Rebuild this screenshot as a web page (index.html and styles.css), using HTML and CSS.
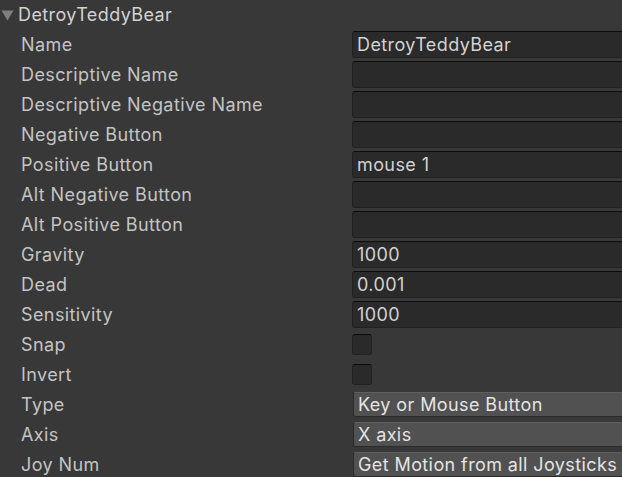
FILE: index.html
```html
<!DOCTYPE html>
<html>
<head>
<meta charset="utf-8">
<link rel="stylesheet" href="styles.css">
</head>
<body>
<div class="inspector">
  <div class="header">
    <svg class="foldout" width="13" height="11" viewBox="0 0 13 11"><polygon points="0.5,0.5 12.5,0.5 6.5,10.5" fill="#7f7f7f"/></svg>
    <span class="title">DetroyTeddyBear</span>
  </div>
  <div class="row"><span class="label">Name</span><div class="field">DetroyTeddyBear</div></div>
  <div class="row"><span class="label">Descriptive Name</span><div class="field"></div></div>
  <div class="row"><span class="label">Descriptive Negative Name</span><div class="field"></div></div>
  <div class="row"><span class="label">Negative Button</span><div class="field"></div></div>
  <div class="row"><span class="label">Positive Button</span><div class="field">mouse 1</div></div>
  <div class="row"><span class="label">Alt Negative Button</span><div class="field"></div></div>
  <div class="row"><span class="label">Alt Positive Button</span><div class="field"></div></div>
  <div class="row"><span class="label">Gravity</span><div class="field">1000</div></div>
  <div class="row"><span class="label">Dead</span><div class="field">0.001</div></div>
  <div class="row"><span class="label">Sensitivity</span><div class="field">1000</div></div>
  <div class="row"><span class="label">Snap</span><div class="checkbox"></div></div>
  <div class="row"><span class="label">Invert</span><div class="checkbox"></div></div>
  <div class="row"><span class="label">Type</span><div class="popup">Key or Mouse Button</div></div>
  <div class="row"><span class="label">Axis</span><div class="popup">X axis</div></div>
  <div class="row"><span class="label">Joy Num</span><div class="popup">Get Motion from all Joysticks</div></div>
</div>
</body>
</html>
```
FILE: styles.css
```css
html, body {
  margin: 0;
  padding: 0;
  background: #383838;
  overflow: hidden;
}
.inspector {
  width: 622px;
  height: 477px;
  overflow: hidden;
  font-family: Inter, "Noto Sans", sans-serif;
  font-size: 18px;
  letter-spacing: 0.4px;
  color: #c4c4c4;
}
.header {
  height: 30px;
  display: flex;
  align-items: center;
  padding-left: 1px;
}
.foldout {
  margin-right: 4px;
}
.title {
  color: #d2d2d2;
  line-height: 29px;
  padding-bottom: 1px;
}
.row {
  height: 30px;
  display: flex;
  align-items: flex-start;
}
.label {
  width: 331px;
  padding-left: 21px;
  white-space: nowrap;
  flex-shrink: 0;
  line-height: 29px;
  padding-bottom: 1px;
}
.field {
  box-sizing: border-box;
  margin-top: 1px;
  height: 27px;
  width: 300px;
  flex-shrink: 0;
  background: #2a2a2a;
  border: 1px solid #212121;
  border-top-color: #0d0d0d;
  border-radius: 3px;
  padding-left: 4px;
  line-height: 25px;
  color: #d2d2d2;
  white-space: nowrap;
}
.checkbox {
  box-sizing: border-box;
  margin-top: 4px;
  width: 20px;
  height: 21px;
  background: #2a2a2a;
  border: 1px solid #212121;
  border-top-color: #0d0d0d;
  border-radius: 3px;
}
.popup {
  box-sizing: border-box;
  margin-top: 2px;
  height: 25px;
  width: 300px;
  flex-shrink: 0;
  margin-left: 1px;
  background: #515151;
  border: 1px solid #2a2a2a;
  border-top-color: #5f5f5f;
  border-radius: 3px;
  padding-left: 4px;
  line-height: 23px;
  color: #e4e4e4;
  white-space: nowrap;
}
```
